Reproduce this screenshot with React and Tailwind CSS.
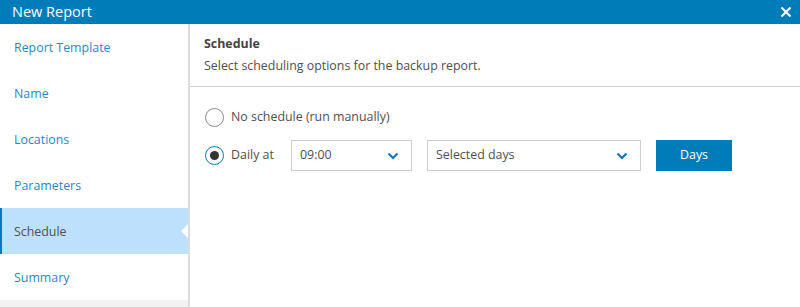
import React, { useState } from "react";

const STEPS = ["Report Template", "Name", "Locations", "Parameters", "Schedule", "Summary"];

function Chevron() {
  return (
    <svg width="12" height="8" viewBox="0 0 12 8" fill="none">
      <path d="M1.5 1.5 L6 6 L10.5 1.5" stroke="#007db8" strokeWidth="2.2" />
    </svg>
  );
}

function Radio({ checked }) {
  return (
    <span
      className={`w-[19px] h-[19px] rounded-full border flex items-center justify-center bg-white ${
        checked ? "border-[#007db8]" : "border-[#8a8a8a]"
      }`}
    >
      {checked && <span className="w-[9px] h-[9px] rounded-full bg-[#333]" />}
    </span>
  );
}

export default function App() {
  const [active] = useState("Schedule");
  const [mode] = useState("daily");

  return (
    <div
      className="w-[800px] h-[307px] flex flex-col bg-white text-[12.4px] text-[#505050] overflow-hidden"
      style={{ fontFamily: '"Open Sans", "Liberation Sans", sans-serif' }}
    >
      {/* title bar */}
      <div className="h-[24px] bg-[#007db8] flex items-center justify-between pl-[12px] pr-[8px] shrink-0">
        <span className="text-white text-[14.5px] leading-none">New Report</span>
        <svg width="12" height="12" viewBox="0 0 12 12">
          <path d="M1.5 1.5 L10.5 10.5 M10.5 1.5 L1.5 10.5" stroke="white" strokeWidth="2" />
        </svg>
      </div>

      <div className="flex flex-1 min-h-0">
        {/* steps */}
        <div className="w-[190px] shrink-0 border-r-2 border-[#dcdcdc] flex flex-col bg-[#f2f2f2]">
          {STEPS.map((s) => {
            const on = s === active;
            return (
              <div
                key={s}
                className={`relative h-[46px] flex items-center pt-[2px] ${
                  on
                    ? "bg-[#bde0fc] text-[#505050] border-l-2 border-[#007db8] pl-[12px]"
                    : "bg-white text-[#2a87c3] pl-[14px]"
                }`}
              >
                {s}
                {on && (
                  <span className="absolute right-0 top-1/2 -translate-y-1/2 w-0 h-0 border-y-[7px] border-y-transparent border-r-[7px] border-r-white" />
                )}
              </div>
            );
          })}
        </div>

        {/* content */}
        <div className="flex-1 flex flex-col">
          <div className="px-[14px] pt-[11px] pb-[11px] border-b border-[#cfcfcf]">
            <div className="font-bold text-[#444] leading-[18px]">Schedule</div>
            <div className="mt-[4px] leading-[18px]">Select scheduling options for the backup report.</div>
          </div>

          <div className="pl-[15px] pt-[15px] flex flex-col gap-[7px]">
            <div className="flex items-center h-[31px]">
              <Radio checked={mode === "none"} />
              <span className="ml-[7px]">No schedule (run manually)</span>
            </div>
            <div className="flex items-center">
              <Radio checked={mode === "daily"} />
              <span className="ml-[7px] w-[60px]">Daily at</span>
              <div className="w-[121px] h-[31px] border border-[#cfcfcf] flex items-center justify-between pl-[8px] pr-[12px]">
                <span>09:00</span>
                <Chevron />
              </div>
              <div className="ml-[15px] w-[214px] h-[31px] border border-[#cfcfcf] flex items-center justify-between pl-[8px] pr-[12px]">
                <span>Selected days</span>
                <Chevron />
              </div>
              <button className="ml-[15px] w-[76px] h-[31px] bg-[#007db8] text-white">Days</button>
            </div>
          </div>
        </div>
      </div>
    </div>
  );
}
